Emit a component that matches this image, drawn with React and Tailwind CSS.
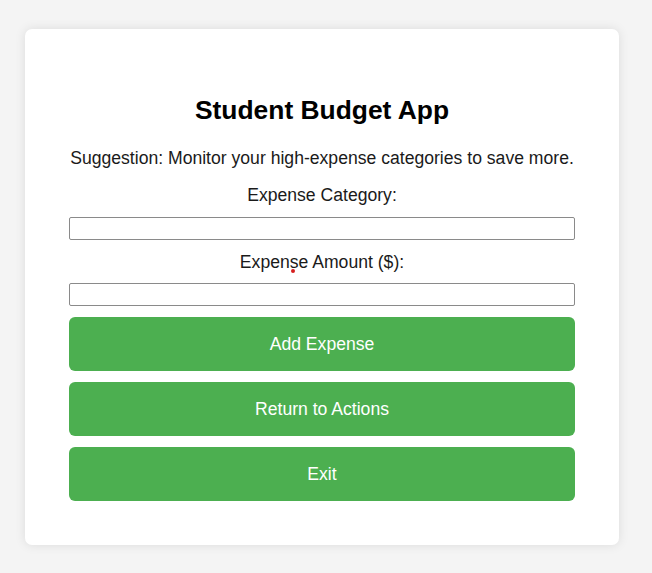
import React, { useState } from 'react';

const App = () => {
    const [category, setCategory] = useState('');
    const [amount, setAmount] = useState('');

    const buttons = ['Add Expense', 'Return to Actions', 'Exit'];

    return (
        <div className="min-h-[573px] bg-[#f4f4f4] pt-[29px] pl-[25px] font-['Liberation_Sans',Arial,sans-serif]">
            <div className="relative w-[594px] rounded-[7px] bg-white px-[44px] pt-[66px] pb-[44px] shadow-[0_0_11px_rgba(0,0,0,0.1)]">
                <h1 className="text-center text-[26.4px] font-bold leading-[30px] text-black">
                    Student Budget App
                </h1>

                <p className="mt-[23px] whitespace-nowrap text-center text-[17.6px] leading-[20px] text-[#1a1a1a]">
                    Suggestion: Monitor your high-expense categories to save more.
                </p>

                <label className="mt-[17px] block text-center text-[17.6px] leading-[20px] text-[#1a1a1a]">
                    Expense Category:
                </label>
                <input
                    type="text"
                    value={category}
                    onChange={(e) => setCategory(e.target.value)}
                    className="mt-[12px] block h-[23px] w-full rounded-[2px] border border-[#8a8a8a] bg-white px-1 text-[15px] outline-none"
                />

                <label className="relative mt-[12px] block text-center text-[17.6px] leading-[20px] text-[#1a1a1a]">
                    Expense Amount ($):
                    {/* stray red dot seen in the capture */}
                    <span className="absolute left-[222px] top-[17px] h-[4px] w-[4px] rounded-full bg-[#d61f1f]"></span>
                </label>
                <input
                    type="text"
                    value={amount}
                    onChange={(e) => setAmount(e.target.value)}
                    className="mt-[11px] block h-[23px] w-full rounded-[2px] border border-[#8a8a8a] bg-white px-1 text-[15px] outline-none"
                />

                <div className="mt-[11px] flex flex-col gap-[11px]">
                    {buttons.map((label) => (
                        <button
                            key={label}
                            className="h-[54px] w-full rounded-[6px] bg-[#4caf50] text-[17.6px] text-white hover:bg-[#45a049]"
                        >
                            {label}
                        </button>
                    ))}
                </div>
            </div>
        </div>
    );
};

export default App;
